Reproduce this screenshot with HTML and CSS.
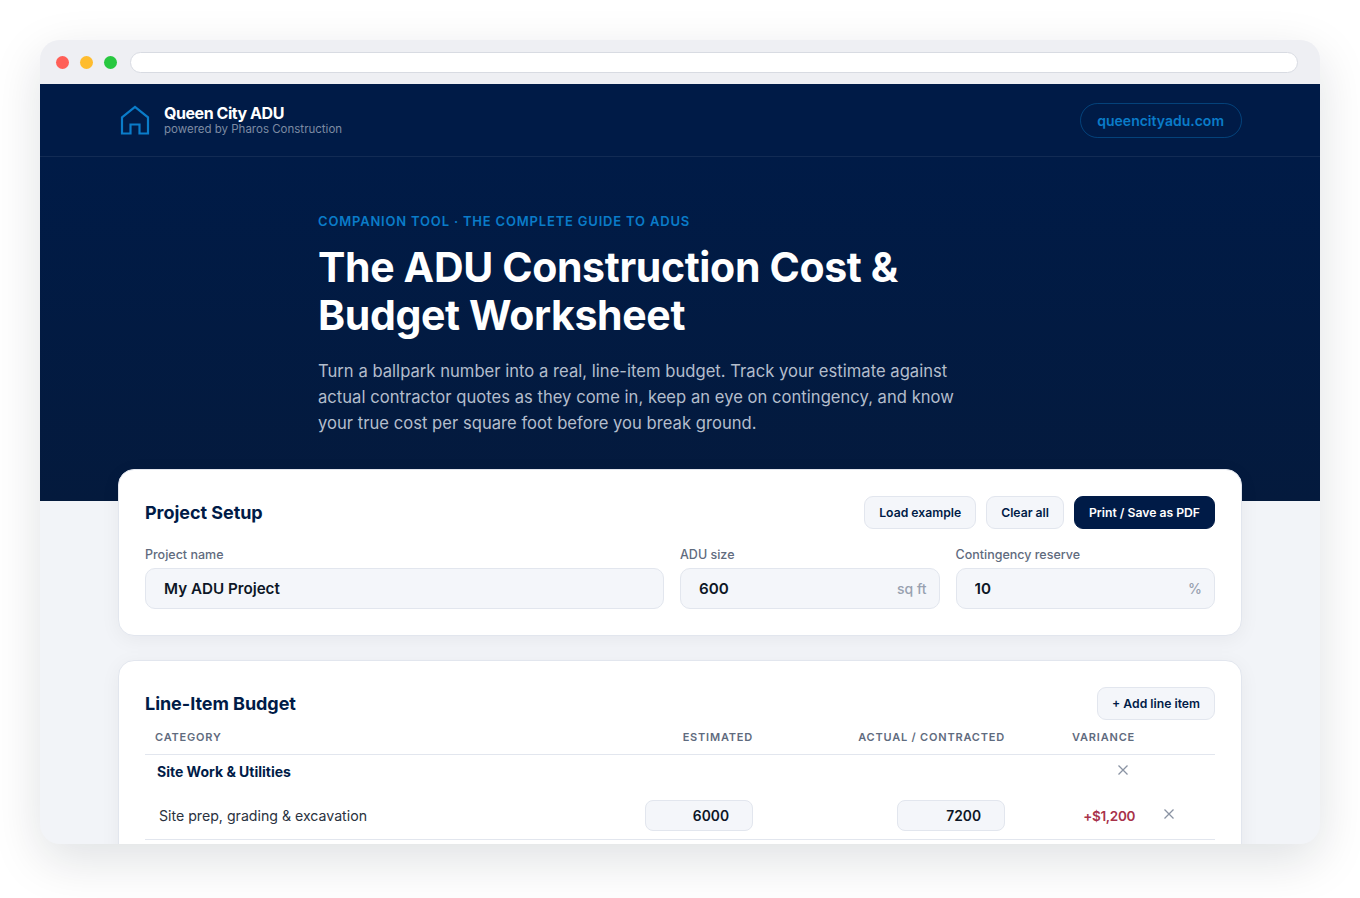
FILE: index.html
```html
<!DOCTYPE html>
<html lang="en">
<head>
  <meta charset="UTF-8" />
  <title>ADU Construction Cost &amp; Budget Worksheet</title>
  <link rel="stylesheet" href="styles.css">
</head>
<body>
  <div class="window">
    <div class="titlebar">
      <span class="dot dot-red"></span>
      <span class="dot dot-yellow"></span>
      <span class="dot dot-green"></span>
      <div class="address"></div>
    </div>

    <div class="page">
      <header class="nav">
        <div class="brand">
          <svg class="brand-icon" width="30" height="30" viewBox="0 0 30 30" fill="none" stroke="#0a7cc9" stroke-width="2.2">
            <path d="M2 12.4 15 2 28 12.4V28.5H19.5V19.5H10.5V28.5H2Z" stroke-linejoin="miter"/>
          </svg>
          <div>
            <div class="brand-name">Queen City ADU</div>
            <div class="brand-sub">powered by Pharos Construction</div>
          </div>
        </div>
        <a class="site-link" href="#">queencityadu.com</a>
      </header>

      <section class="hero">
        <div class="hero-inner">
          <div class="eyebrow">COMPANION TOOL · THE COMPLETE GUIDE TO ADUS</div>
          <h1>The ADU Construction Cost &amp; Budget Worksheet</h1>
          <p>Turn a ballpark number into a real, line-item budget. Track your estimate against actual contractor quotes as they come in, keep an eye on contingency, and know your true cost per square foot before you break ground.</p>
        </div>
      </section>

      <main class="content">
        <section class="card">
          <div class="card-head">
            <h2>Project Setup</h2>
            <div class="actions">
              <button class="btn">Load example</button>
              <button class="btn">Clear all</button>
              <button class="btn btn-dark">Print / Save as PDF</button>
            </div>
          </div>
          <div class="setup-grid">
            <label class="field">
              <span class="field-label">Project name</span>
              <span class="input-box"><input type="text" value="My ADU Project" /></span>
            </label>
            <label class="field">
              <span class="field-label">ADU size</span>
              <span class="input-box"><input type="text" value="600" /><span class="unit">sq ft</span></span>
            </label>
            <label class="field">
              <span class="field-label">Contingency reserve</span>
              <span class="input-box"><input type="text" value="10" /><span class="unit">%</span></span>
            </label>
          </div>
        </section>

        <section class="card">
          <div class="card-head budget-head">
            <h2>Line-Item Budget</h2>
            <button class="btn">+ Add line item</button>
          </div>
          <div class="budget-row table-head">
            <div class="col-cat">CATEGORY</div>
            <div class="col-num">ESTIMATED</div>
            <div class="col-num">ACTUAL / CONTRACTED</div>
            <div class="col-num">VARIANCE</div>
          </div>
          <div class="budget-row group-row">
            <div class="group-name">Site Work &amp; Utilities</div>
            <div></div>
            <div></div>
            <button class="remove remove-group" aria-label="Remove group">
              <svg width="10" height="10" viewBox="0 0 10 10" stroke="#8a93a3" stroke-width="1.3"><path d="M.5.5l9 9M9.5.5l-9 9"/></svg>
            </button>
          </div>
          <div class="budget-row item-row">
            <div class="item-name">Site prep, grading &amp; excavation</div>
            <input class="num-input" type="text" value="6000" />
            <input class="num-input" type="text" value="7200" />
            <div class="variance">+$1,200</div>
            <button class="remove remove-item" aria-label="Remove line">
              <svg width="10" height="10" viewBox="0 0 10 10" stroke="#8a93a3" stroke-width="1.3"><path d="M.5.5l9 9M9.5.5l-9 9"/></svg>
            </button>
          </div>
        </section>
      </main>
    </div>
  </div>
</body>
</html>
```

FILE: styles.css
```css
:root {
  --navy: #001b47;
  --blue: #0a7cc9;
  --line: #e2e6ee;
  --field: #f4f6fa;
  --muted: #5f6b7e;
}

* {
  box-sizing: border-box;
}

html, body {
  height: 100%;
}

body {
  margin: 0;
  padding: 40px;
  overflow: hidden;
  background-color: #fff;
  font-family: 'Inter', sans-serif;
  color: #0d1626;
}

.window {
  height: 804px;
  border-radius: 20px;
  overflow: hidden;
  background-color: #f2f4f8;
  box-shadow: 0 16px 50px rgba(10, 20, 40, 0.13);
}

.titlebar {
  display: flex;
  align-items: center;
  gap: 11px;
  height: 44px;
  padding: 0 22px 0 16px;
  background-color: #eeeff3;
}

.dot {
  flex: none;
  width: 13px;
  height: 13px;
  border-radius: 50%;
}

.dot-red { background-color: #ff5f57; }
.dot-yellow { background-color: #febc2e; }
.dot-green { background-color: #28c840; }

.address {
  flex: 1;
  height: 21px;
  margin-left: 2px;
  background-color: #fff;
  border: 1px solid #d8dbe2;
  border-radius: 11px;
}

.nav {
  display: flex;
  justify-content: space-between;
  align-items: center;
  height: 73px;
  padding: 0 78px 0 80px;
  background-color: var(--navy);
  border-bottom: 1px solid rgba(255, 255, 255, 0.07);
}

.brand {
  display: flex;
  align-items: center;
  gap: 14px;
}

.brand-name {
  font-size: 16px;
  line-height: 17px;
  font-weight: 700;
  letter-spacing: -0.45px;
  color: #fff;
}

.brand-sub {
  font-size: 11.5px;
  line-height: 14px;
  color: #7d8ba3;
}

.site-link {
  display: block;
  height: 35px;
  padding: 0 17px 0 16px;
  line-height: 34px;
  font-size: 14px;
  font-weight: 600;
  color: var(--blue);
  text-decoration: none;
  border: 1px solid rgba(10, 124, 201, 0.4);
  border-radius: 18px;
}

.hero {
  height: 344px;
  padding-top: 56px;
  background: linear-gradient(#001b47, #041a3d);
}

.hero-inner {
  width: 724px;
  margin: 0 auto;
}

.eyebrow {
  font-size: 13px;
  line-height: 16px;
  font-weight: 600;
  letter-spacing: 0.81px;
  color: var(--blue);
}

h1 {
  margin: 14px 0 0;
  max-width: 640px;
  font-size: 41px;
  line-height: 48px;
  font-weight: 700;
  letter-spacing: -0.35px;
  color: #fff;
}

.hero p {
  margin: 19px 0 0;
  max-width: 640px;
  font-size: 16.6px;
  line-height: 26px;
  letter-spacing: 0.02px;
  color: #b3bdcc;
}

.content {
  display: flex;
  flex-direction: column;
  gap: 24px;
  margin-top: -32px;
  padding: 0 78px;
}

.card {
  padding: 26px;
  background-color: #fff;
  border: 1px solid var(--line);
  border-radius: 16px;
  box-shadow: 0 4px 20px rgba(10, 20, 40, 0.05);
}

.card-head {
  display: flex;
  justify-content: space-between;
  align-items: center;
}

h2 {
  margin: 0;
  font-size: 18px;
  font-weight: 700;
  letter-spacing: -0.05px;
  color: var(--navy);
}

.actions {
  display: flex;
  gap: 10px;
}

.btn {
  height: 33px;
  padding: 0 14px;
  font-family: inherit;
  font-size: 12.2px;
  font-weight: 600;
  color: var(--navy);
  background-color: var(--field);
  border: 1px solid var(--line);
  border-radius: 9px;
  cursor: pointer;
}

.btn-dark {
  color: #fff;
  background-color: var(--navy);
  border-color: var(--navy);
}

.setup-grid {
  display: grid;
  grid-template-columns: minmax(0, 2fr) minmax(0, 1fr) minmax(0, 1fr);
  gap: 16px;
  margin-top: 18px;
}

.field {
  display: block;
}

.field-label {
  display: block;
  margin-bottom: 5px;
  font-size: 12.5px;
  line-height: 16px;
  font-weight: 500;
  color: var(--muted);
}

.input-box {
  display: flex;
  align-items: center;
  height: 41px;
  padding: 0 12px 0 18px;
  background-color: var(--field);
  border: 1px solid var(--line);
  border-radius: 10px;
}

.input-box input {
  flex: 1;
  min-width: 0;
  padding: 0;
  font-family: inherit;
  font-size: 15.2px;
  font-weight: 600;
  color: #0d1626;
  background: none;
  border: none;
  outline: none;
}

.unit {
  font-size: 14px;
  font-weight: 500;
  color: #98a1b0;
}

.budget-row {
  display: grid;
  grid-template-columns: 500px 108px 252px 130px 80px;
  align-items: center;
}

.budget-head {
  margin-bottom: 7px;
}

.table-head {
  height: 28px;
  padding-bottom: 8px;
  font-size: 11px;
  font-weight: 600;
  letter-spacing: 0.8px;
  color: var(--muted);
  border-bottom: 1px solid var(--line);
}

.col-cat {
  padding-left: 10px;
}

.col-num {
  text-align: right;
  white-space: nowrap;
}

.group-row {
  height: 33px;
}

.group-name {
  padding-left: 12px;
  font-size: 14px;
  font-weight: 700;
  color: var(--navy);
}

.item-row {
  height: 52px;
  padding-top: 4px;
  border-bottom: 1px solid var(--line);
}

.item-name {
  padding-left: 14px;
  font-size: 14.15px;
  color: #2a3240;
}

.num-input {
  width: 108px;
  height: 31px;
  justify-self: end;
  padding: 0 23px 0 8px;
  font-family: inherit;
  font-size: 13.8px;
  font-weight: 600;
  text-align: right;
  color: #0d1626;
  background-color: var(--field);
  border: 1px solid var(--line);
  border-radius: 8px;
  outline: none;
}

.variance {
  text-align: right;
  font-size: 13.5px;
  font-weight: 600;
  letter-spacing: -0.35px;
  color: #a8324a;
}

.remove {
  display: flex;
  justify-content: center;
  align-items: center;
  width: 20px;
  height: 20px;
  margin-left: 24px;
  padding: 0;
  background: none;
  border: none;
  cursor: pointer;
}

.remove-item {
  margin-top: -3px;
}

.remove-group {
  grid-column: 4;
  justify-self: end;
  margin: -3px 2px 0 0;
}
```
